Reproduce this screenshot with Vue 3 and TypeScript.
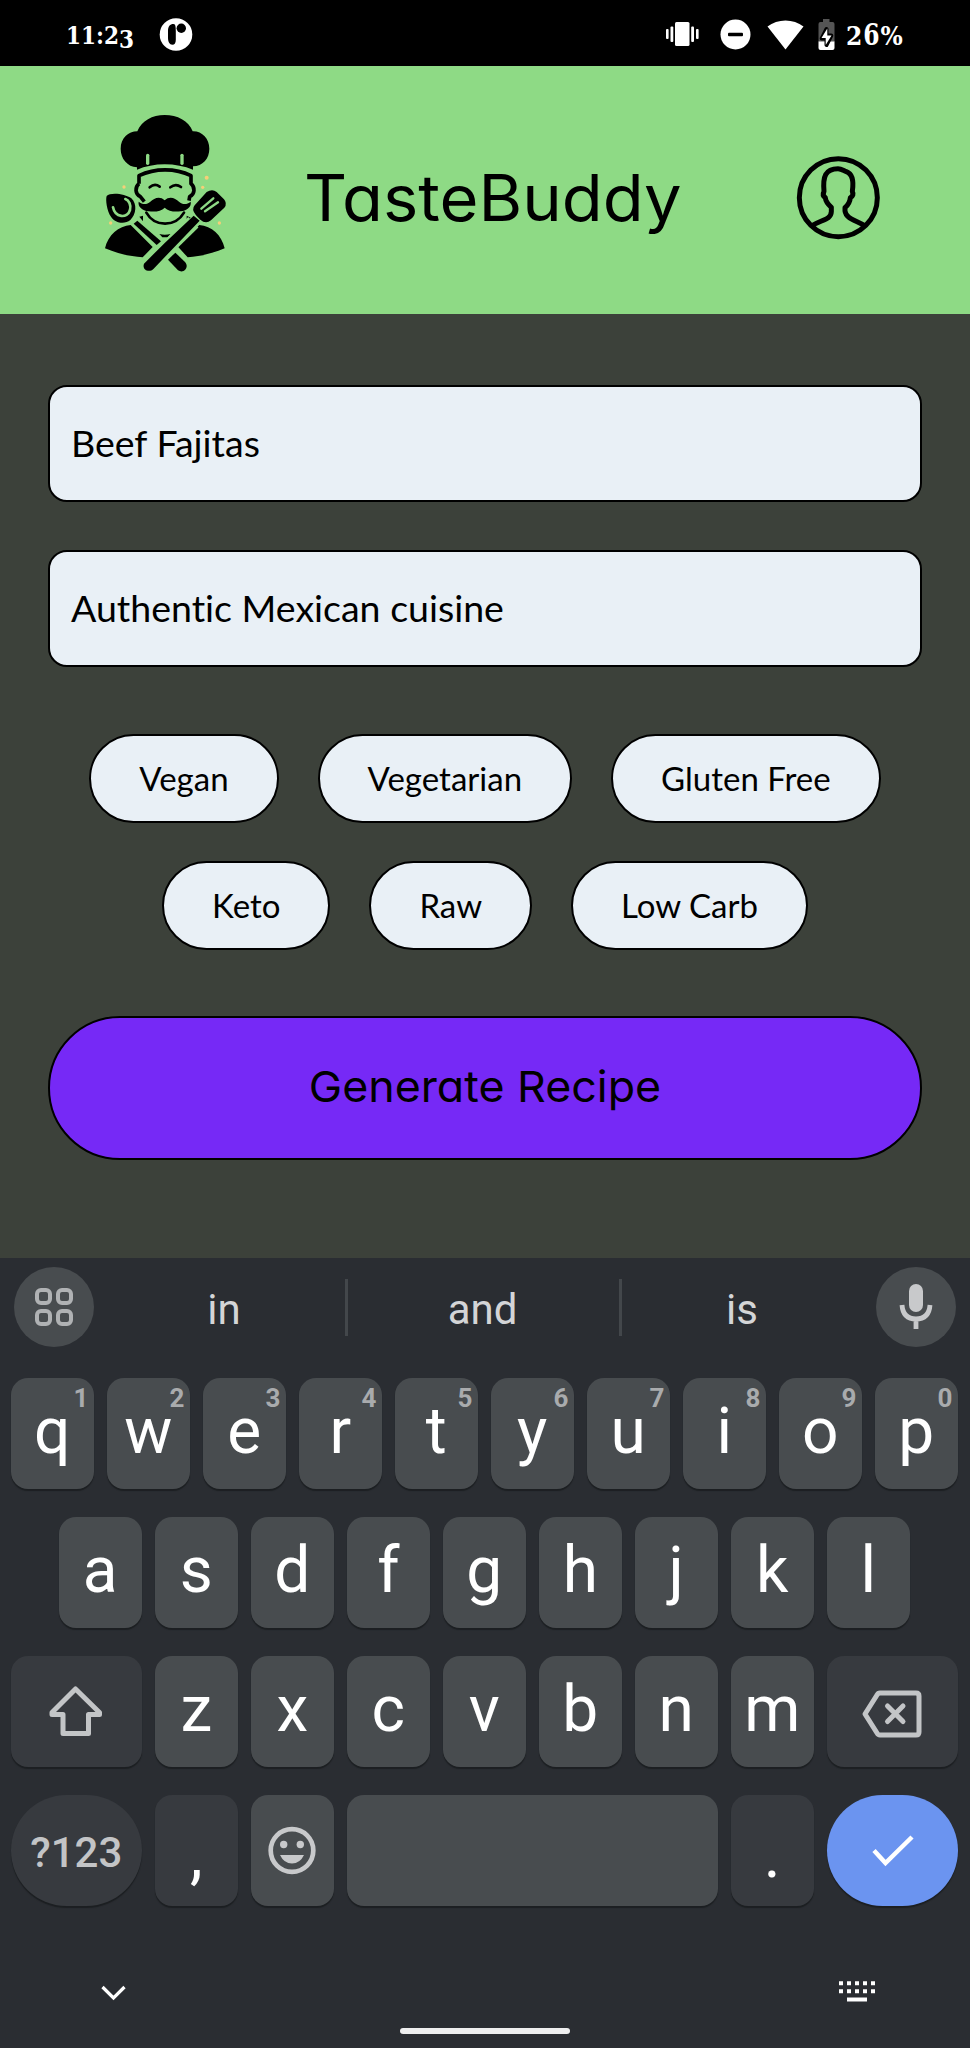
<script setup lang="ts">
import { ref } from 'vue'

interface Key {
  label: string
  hint?: string
}

const fields = ref<string[]>(['Beef Fajitas', 'Authentic Mexican cuisine'])
const dietRows: string[][] = [
  ['Vegan', 'Vegetarian', 'Gluten Free'],
  ['Keto', 'Raw', 'Low Carb'],
]

const topRow: Key[] = [...'qwertyuiop'].map((label, i) => ({ label, hint: String((i + 1) % 10) }))
const homeRow: Key[] = [...'asdfghjkl'].map((label) => ({ label }))
const bottomRow: Key[] = [...'zxcvbnm'].map((label) => ({ label }))
</script>

<template>
  <div class="screen">
    <div class="status">
      <span class="clock">11:2<span class="low">3</span></span>
      <svg class="app-dot" viewBox="0 0 34 34">
        <circle cx="17" cy="17.500" r="16.300" fill="#fff" />
        <path d="M14.500 7c-3.600 0-5.500 2.600-5.500 6.600v7.200c0 4 1.600 6.900 4.300 6.900 2.500 0 3.500-2 3.500-5v-8.700c0-3.500-.1-7-2.300-7z" fill="#000" />
        <circle cx="22.300" cy="11.300" r="4.700" fill="#000" />
      </svg>
      <svg class="system" viewBox="0 0 172 34">
        <g fill="#fff">
          <rect x="10" y="5" width="14.500" height="24" rx="1.500" />
          <rect x="5.500" y="9.500" width="2.800" height="15.500" rx="1" />
          <rect x="1" y="12" width="2.600" height="10" rx="1" />
          <rect x="26.200" y="9.500" width="2.800" height="15.500" rx="1" />
          <rect x="31" y="12" width="2.600" height="10" rx="1" />
          <circle cx="70.500" cy="17.500" r="15" />
          <path d="M120.500 32.500L102.500 9.500C112.500 1.500 128.500 1.500 138.500 9.500z" />
        </g>
        <rect x="63" y="15.700" width="15" height="3.600" rx="1" fill="#000" />
        <path d="M158 2h6.500v3h3q2 0 2 2v18h-16V7q0-2 2-2h2.500z" fill="#555" />
        <path d="M153.500 24.500h16v6.500q0 2-2 2h-12q-2 0-2-2z" fill="#fff" />
        <path d="M161.500 12v6.500h4.800L161.500 28v-6.500h-4.800z" fill="#000" stroke="#000" stroke-width="4" stroke-linejoin="round" />
        <path d="M162.300 11.500v7h4.200L160.700 28v-7h-4.200z" fill="#fff" />
      </svg>
      <span class="charge">2<span class="tall">6</span>%</span>
    </div>

    <header class="header">
      <svg class="logo" viewBox="0 0 450 570">
        <path d="M141 202C112 200 92 176 92 146C92 114 115 94 142 94C155 62 187 45 224 45C262 45 296 62 308 94C336 93 358 116 358 146C358 176 338 198 309 199V209C258 187 190 187 141 209Z" />
        <g stroke="#8eda85" stroke-width="10" stroke-linecap="round">
          <path d="M173 166V190" />
          <path d="M276 166V190" />
        </g>
        <path d="M147 251V227C195 204 256 204 303 227V251C316 262 315 282 299 290L297 302M147 251C134 262 135 282 151 290L163 305" fill="none" stroke="#000" stroke-width="11" stroke-linejoin="round" />
        <g fill="none" stroke="#000" stroke-width="8" stroke-linecap="round">
          <path d="M179 262Q194 249 209 260" />
          <path d="M241 262Q257 249 273 261" />
          <path d="M169 338C194 382 256 382 282 338" />
        </g>
        <path d="M224 301C210 287 192 294 181 305C170 315 157 314 146 305C143 319 156 332 176 334C197 336 214 334 224 323C235 334 252 336 272 334C292 332 305 319 302 305C291 314 278 315 267 305C256 294 238 287 224 301Z" />
        <path d="M148 350L159 347V364ZM290 347L302 353L290 364ZM208 402Q224 406 242 402L233 412H217Z" />
        <path d="M45 445C54 405 86 378 122 375L188 441L158 472C120 469 82 461 45 445ZM404 445C395 405 365 378 328 375L262 438L293 472C332 469 370 460 404 445Z" />
        <path d="M50 288C60 276 105 280 124 295C142 312 139 343 121 360C104 374 76 370 63 350C51 334 46 299 50 288Z" />
        <path d="M69 322C75 353 112 357 120 330C124 315 117 301 106 297" fill="none" stroke="#8eda85" stroke-width="8" stroke-linecap="round" />
        <path d="M131 371L142 362L213 424L200 435Z" />
        <path d="M234 479L256 458L285 486C299 501 281 523 264 511Z" />
        <path d="M310 367L225 450" stroke="#8eda85" stroke-width="44" />
        <path d="M311 347L329 362L191 506C178 520 155 510 162 491L225 428Z" />
        <path d="M350 276Q367 265 380 276L402 298Q413 311 403 323L363 361Q347 373 331 359L318 346Q303 328 314 316Z" />
        <path d="M334 326L370 295M345 334L384 307" stroke="#8eda85" stroke-width="7" stroke-linecap="round" />
        <g fill="#f6cf78">
          <circle cx="350" cy="233" r="6" />
          <circle cx="338" cy="262" r="5" />
          <circle cx="102" cy="261" r="5" />
          <circle cx="62" cy="369" r="5" />
          <circle cx="388" cy="369" r="5" />
        </g>
      </svg>
      <h1 class="brand">TasteBuddy</h1>
      <svg class="profile" viewBox="0 0 360 360" fill="none" stroke="#000" stroke-width="15">
        <circle cx="175" cy="173" r="117" />
        <path d="M96 257C128 238 153 239 154 215V202C143 192 137 183 136 173C128 168 129 160 132 154C128 110 136 86 174 86C184 86 191 92 199 95C216 101 222 120 217 154C221 162 219 169 211 173C210 184 205 194 195 203V213C198 236 226 240 254 257" stroke-linejoin="round" />
      </svg>
    </header>

    <main class="form">
      <div v-for="field in fields" :key="field" class="field">{{ field }}</div>
      <div class="diets">
        <div v-for="(row, i) in dietRows" :key="i" class="diet-row">
          <button v-for="diet in row" :key="diet" class="chip">{{ diet }}</button>
        </div>
      </div>
      <button class="generate"><span class="generate-label">Generate Recipe</span></button>
    </main>

    <section class="keyboard">
      <div class="suggest">
        <span class="round">
          <svg viewBox="0 0 80 80" width="80" height="80" fill="none" stroke="#b0b2b4" stroke-width="4">
            <rect x="23" y="23" width="13" height="13" rx="4" />
            <rect x="44" y="23" width="13" height="13" rx="4" />
            <rect x="23" y="44" width="13" height="13" rx="4" />
            <rect x="44" y="44" width="13" height="13" rx="4" />
          </svg>
        </span>
        <span class="word first">in</span>
        <span class="rule"></span>
        <span class="word middle">and</span>
        <span class="rule"></span>
        <span class="word last">is</span>
        <span class="round">
          <svg viewBox="0 0 80 80" width="80" height="80">
            <rect x="33" y="17" width="14" height="28" rx="7" fill="#c8c9cb" />
            <path d="M26 38Q27 52 40 52Q53 52 54 38M40 52V62" fill="none" stroke="#c8c9cb" stroke-width="4.800" />
          </svg>
        </span>
      </div>

      <div class="keys">
        <div class="row">
          <div v-for="k in topRow" :key="k.label" class="key">{{ k.label }}<span class="hint">{{ k.hint }}</span></div>
        </div>
        <div class="row">
          <div v-for="k in homeRow" :key="k.label" class="key">{{ k.label }}</div>
        </div>
        <div class="row">
          <div class="key wide dim">
            <svg viewBox="0 0 130 111" width="130" height="111" fill="none" stroke="#c3c5c7" stroke-width="5" stroke-linejoin="round">
              <path d="M64.500 33L41 56.500V58.500H52V77.500H77.500V58.500H88.500V56.500Z" />
            </svg>
          </div>
          <div v-for="k in bottomRow" :key="k.label" class="key">{{ k.label }}</div>
          <div class="key wide dim">
            <svg viewBox="0 0 131 111" width="131" height="111" fill="none" stroke="#c3c5c7" stroke-width="5" stroke-linejoin="round">
              <path d="M53 37H89Q92 37 92 40V76Q92 79 89 79H53Q51 79 50 77L38 58L50 39Q51 37 53 37Z" />
              <path d="M60.500 50L76 65.500M76 50L60.500 65.500" stroke-linecap="round" />
            </svg>
          </div>
        </div>
        <div class="row">
          <div class="key wide dim symbols">?123</div>
          <div class="key dim punct">,</div>
          <div class="key">
            <svg viewBox="0 0 82 111" width="82" height="111" fill="#c8c9cb">
              <circle cx="41" cy="55.500" r="21.300" fill="none" stroke="#c8c9cb" stroke-width="4.700" />
              <circle cx="32.700" cy="49.500" r="3.700" />
              <circle cx="49.300" cy="49.500" r="3.700" />
              <path d="M29 60H53Q49 68.500 41 68.500Q33 68.500 29 60Z" />
            </svg>
          </div>
          <div class="key space"></div>
          <div class="key dim punct">.</div>
          <div class="key wide enter">
            <svg viewBox="0 0 131 111" width="131" height="111" fill="none" stroke="#fff" stroke-width="4.500">
              <path d="M47 55.500L58.500 68L85 42" />
            </svg>
          </div>
        </div>
      </div>

      <div class="nav">
        <svg class="chevron" viewBox="0 0 26 18" width="26" height="18" fill="none" stroke="#fff" stroke-width="3.200">
          <path d="M2.500 3L13.500 14L24.500 3" />
        </svg>
        <svg viewBox="0 0 36 21" width="36" height="21" stroke="#fff" fill="none" stroke-width="4">
          <path d="M0 2.200H36M0 10.200H36" stroke-dasharray="4 4" />
          <path d="M8 18.500H28" />
        </svg>
      </div>
      <div class="home"></div>
    </section>
  </div>
</template>

<style>
body {
  margin: 0;
  background: #2a2d32;
}
</style>

<style scoped>
.screen {
  width: 970px;
  height: 2048px;
  display: flex;
  flex-direction: column;
  overflow: hidden;
  background: #3c413a;
}
.status {
  height: 66px;
  flex: none;
  display: flex;
  align-items: center;
  box-sizing: border-box;
  padding: 2px 66px 0;
  background: #000;
  color: #fff;
  font: bold 24px/1 "DejaVu Serif Condensed", "DejaVu Serif", serif;
}
.clock {
  width: 67px;
  margin-right: 26px;
  padding-top: 3px;
  white-space: nowrap;
}
.charge {
  width: 58px;
  margin-left: 9px;
  padding-top: 3px;
  font-size: 26px;
  letter-spacing: 1px;
  white-space: nowrap;
}
.low {
  display: inline-block;
  transform: translateY(3.5px);
}
.tall {
  display: inline-block;
  transform: scaleY(1.18);
  transform-origin: 50% 84%;
}
.app-dot {
  width: 34px;
  height: 34px;
}
.system {
  width: 172px;
  height: 34px;
  margin-left: auto;
  flex: none;
}
.header {
  height: 248px;
  flex: none;
  display: flex;
  align-items: center;
  box-sizing: border-box;
  padding: 0 70px 0 90px;
  background: #8eda85;
}
.logo {
  width: 150px;
  height: 190px;
  margin-top: 10px;
}
.brand {
  margin: 16px 0 0 64px;
  color: #000;
  font: 400 64px/80px Inter, sans-serif;
  font-feature-settings: "cv11" 1;
  white-space: nowrap;
  transform: scaleX(1.045);
  transform-origin: 0 50%;
}
.profile {
  width: 120px;
  height: 120px;
  margin-left: auto;
  margin-top: 20px;
}
.form {
  height: 944px;
  flex: none;
  box-sizing: border-box;
  padding: 71px 48px 0;
}
.field {
  height: 117px;
  box-sizing: border-box;
  margin-bottom: 48px;
  padding-left: 21px;
  border: 2px solid #000;
  border-radius: 19px;
  background: #e9f0f6;
  color: #000;
  font: 37.5px/111px Lato, sans-serif;
  font-variant-ligatures: none;
}
.diets {
  display: flex;
  flex-direction: column;
  gap: 38px;
  margin-top: 67px;
}
.diet-row {
  display: flex;
  justify-content: center;
  gap: 39px;
}
.chip {
  height: 89px;
  box-sizing: border-box;
  padding: 0 48px;
  border: 2px solid #000;
  border-radius: 45px;
  background: #e9f0f6;
  color: #000;
  font: 33px/85px Lato, sans-serif;
}
.generate {
  display: block;
  width: 874px;
  height: 144px;
  margin-top: 66px;
  padding: 0;
  border: 2px solid #000;
  border-radius: 72px;
  background: #7629f6;
  color: #000;
  font: 400 43px/136px Inter, sans-serif;
  font-feature-settings: "cv11" 1;
}
.generate-label {
  display: block;
  height: 140px;
  transform: scaleX(1.04);
}
.keyboard {
  height: 790px;
  flex: none;
  background: #2a2d32;
  font-family: Roboto, sans-serif;
  color: #fff;
}
.suggest {
  height: 80px;
  padding: 9px 14px 0;
  display: flex;
  align-items: center;
}
.round {
  width: 80px;
  height: 80px;
  flex: none;
  border-radius: 50%;
  background: #484c4f;
}
.round svg {
  display: block;
}
.word {
  text-align: center;
  color: #d4d5d7;
  font-size: 42px;
  line-height: 76px;
  padding-top: 5px;
}
.first {
  box-sizing: border-box;
  width: 260px;
  margin-right: -9px;
}
.middle {
  width: 269px;
  margin-right: 2px;
}
.last {
  flex: 1;
  margin: 0 4px 0 -10px;
}
.rule {
  width: 3px;
  height: 57px;
  flex: none;
  background: #43474b;
}
.keys {
  display: flex;
  flex-direction: column;
  gap: 28px;
  padding: 31px 12.5px 0 11px;
}
.row {
  display: flex;
  justify-content: center;
  gap: 13.5px;
}
.key {
  position: relative;
  width: 82.5px;
  height: 111px;
  flex: none;
  border-radius: 17px;
  background: #484c4f;
  box-shadow: 0 2px 1px #1c1f22;
  text-align: center;
  font-size: 64px;
  line-height: 107px;
}
.key svg {
  display: block;
  margin: 0 auto;
}
.hint {
  position: absolute;
  top: 6px;
  right: 5px;
  color: #a9abad;
  font-size: 26px;
  font-weight: 700;
  line-height: 28px;
}
.wide {
  width: 130.5px;
}
.dim {
  background: #373a3f;
}
.symbols {
  border-radius: 56px;
  color: #c3c4c6;
  font-size: 42px;
  font-weight: 500;
  line-height: 115px;
}
.punct {
  line-height: 122px;
}
.space {
  width: 370.5px;
}
.enter {
  border-radius: 56px;
  background: #6b94f0;
}
.nav {
  display: flex;
  justify-content: space-between;
  padding: 75px 95px 0 100px;
  height: 21px;
}
.chevron {
  margin-top: 3px;
}
.home {
  width: 170px;
  height: 6px;
  margin: 26px auto 0;
  border-radius: 3px;
  background: #eeeeef;
}
</style>
